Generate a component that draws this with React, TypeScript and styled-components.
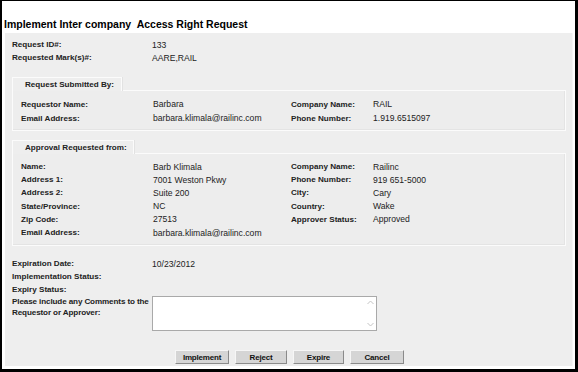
import React from "react";
import styled, { createGlobalStyle } from "styled-components";

const Global = createGlobalStyle`
  html, body { margin: 0; padding: 0; background: #fff; }
  * { box-sizing: border-box; }
`;

const Frame = styled.div`
  width: 578px;
  height: 372px;
  border-style: solid;
  border-color: #000;
  border-width: 1px 3px 3px 2px;
  background: #fff;
  display: flex;
  flex-direction: column;
  font-family: "Liberation Sans", Arial, sans-serif;
  color: #1e1e1e;
`;

const Title = styled.h1`
  margin: 0;
  padding: 17px 0 3px 2px;
  height: 32px;
  font-size: 10.5px;
  line-height: 12px;
  font-weight: bold;
  color: #000;
  white-space: pre;
`;

const Panel = styled.div`
  margin: 0 2px 3px 3px;
  flex: 1;
  background: #eeeeee;
  border-right: 1px solid #f6f6f6;
  padding: 5px 5px 0 7px;
  display: flex;
  flex-direction: column;
`;

const Grid = styled.div<{ $cols: string; $row: number }>`
  display: grid;
  grid-template-columns: ${(p) => p.$cols};
  grid-auto-rows: ${(p) => p.$row}px;
  align-items: center;
`;

const Label = styled.div`
  font-size: 8.1px;
  font-weight: bold;
  color: #222;
  white-space: nowrap;
`;

const Value = styled.div`
  font-size: 8.6px;
  color: #222;
  white-space: nowrap;
`;

const Group = styled.div<{ $top: number }>`
  margin-top: ${(p) => p.$top}px;
  display: flex;
  flex-direction: column;
`;

const Tab = styled.div<{ $w: number }>`
  width: ${(p) => p.$w}px;
  height: 14px;
  margin-bottom: -1px;
  position: relative;
  z-index: 1;
  background: #eeeeee;
  border: 1px solid #fbfbfb;
  border-bottom: none;
  box-shadow: 1px 0 0 #e2e2e2;
  font-size: 8.1px;
  font-weight: bold;
  color: #222;
  line-height: 13px;
  padding-left: 12px;
  white-space: nowrap;
`;

const Box = styled.div<{ $h: number }>`
  height: ${(p) => p.$h}px;
  margin-right: 1px;
  border: 1px solid #fbfbfb;
  box-shadow: inset -1px -1px 0 #e4e4e4;
  background: #ededed;
  padding: 6px 0 0 8px;
`;

const Bottom = styled.div`
  margin-top: 11px;
  display: grid;
  grid-template-columns: 140px 1fr;
  grid-auto-rows: 13px;
  align-items: center;
`;

const CommentRow = styled.div`
  display: grid;
  grid-template-columns: 140px 1fr;
  align-items: start;
`;

const WrapLabel = styled(Label)`
  line-height: 10.5px;
  padding-top: 1px;
  letter-spacing: -0.12px;
`;

const TextBox = styled.div`
  width: 225px;
  height: 35px;
  background: #fff;
  border: 1px solid #a9a9a9;
  display: flex;
`;

const TextInput = styled.textarea`
  flex: 1;
  border: none;
  outline: none;
  resize: none;
  background: transparent;
  font-family: "Liberation Sans", Arial, sans-serif;
  font-size: 9px;
`;

const ScrollTrack = styled.div`
  width: 12px;
  display: flex;
  flex-direction: column;
  justify-content: space-between;
  align-items: center;
  padding: 3px 0;
`;

const Buttons = styled.div`
  margin-top: 19px;
  display: flex;
  justify-content: center;
  gap: 6px;
`;

const Button = styled.button<{ $w: number }>`
  width: ${(p) => p.$w}px;
  height: 14px;
  padding: 0;
  background: #d5d5d5;
  border: 1px solid;
  border-color: #f6f6f6 #8a8a8a #8a8a8a #f6f6f6;
  font-family: "Liberation Sans", Arial, sans-serif;
  font-size: 8px;
  font-weight: bold;
  color: #111;
  letter-spacing: -0.2px;
`;

const Chevron = ({ up }: { up?: boolean }) => (
  <svg width="7" height="5" viewBox="0 0 7 5">
    <path
      d={up ? "M0.5 4 L3.5 1 L6.5 4" : "M0.5 1 L3.5 4 L6.5 1"}
      fill="none"
      stroke="#c4c4c4"
      strokeWidth="1"
    />
  </svg>
);

const boxCols = "132px 138px 82px 1fr";

const submitted: [string, string, string, string][] = [
  ["Requestor Name:", "Barbara", "Company Name:", "RAIL"],
  ["Email Address:", "barbara.klimala@railinc.com", "Phone Number:", "1.919.6515097"],
];

const approval: [string, string, string, string][] = [
  ["Name:", "Barb Klimala", "Company Name:", "Railinc"],
  ["Address 1:", "7001 Weston Pkwy", "Phone Number:", "919 651-5000"],
  ["Address 2:", "Suite 200", "City:", "Cary"],
  ["State/Province:", "NC", "Country:", "Wake"],
  ["Zip Code:", "27513", "Approver Status:", "Approved"],
  ["Email Address:", "barbara.klimala@railinc.com", "", ""],
];

const renderRows = (rows: [string, string, string, string][]) =>
  rows.map((r, i) => (
    <React.Fragment key={i}>
      <Label>{r[0]}</Label>
      <Value>{r[1]}</Value>
      <Label>{r[2]}</Label>
      <Value>{r[3]}</Value>
    </React.Fragment>
  ));

export default function App() {
  return (
    <>
      <Global />
      <Frame>
        <Title>{"Implement Inter company  Access Right Request"}</Title>
        <Panel>
          <Grid $cols="140px 1fr" $row={13}>
            <Label>Request ID#:</Label>
            <Value>133</Value>
            <Label>Requested Mark(s)#:</Label>
            <Value>AARE,RAIL</Value>
          </Grid>

          <Group $top={13}>
            <Tab $w={110}>Request Submitted By:</Tab>
            <Box $h={41}>
              <Grid $cols={boxCols} $row={14}>
                {renderRows(submitted)}
              </Grid>
            </Box>
          </Group>

          <Group $top={9}>
            <Tab $w={122}>Approval Requested from:</Tab>
            <Box $h={93}>
              <Grid $cols={boxCols} $row={13.2}>
                {renderRows(approval)}
              </Grid>
            </Box>
          </Group>

          <Bottom>
            <Label>Expiration Date:</Label>
            <Value>10/23/2012</Value>
            <Label>Implementation Status:</Label>
            <Value />
            <Label>Expiry Status:</Label>
            <Value />
          </Bottom>

          <CommentRow>
            <WrapLabel>
              Please include any Comments to the
              <br />
              Requestor or Approver:
            </WrapLabel>
            <TextBox>
              <TextInput />
              <ScrollTrack>
                <Chevron up />
                <Chevron />
              </ScrollTrack>
            </TextBox>
          </CommentRow>

          <Buttons>
            <Button $w={54}>Implement</Button>
            <Button $w={52}>Reject</Button>
            <Button $w={51}>Expire</Button>
            <Button $w={54}>Cancel</Button>
          </Buttons>
        </Panel>
      </Frame>
    </>
  );
}
